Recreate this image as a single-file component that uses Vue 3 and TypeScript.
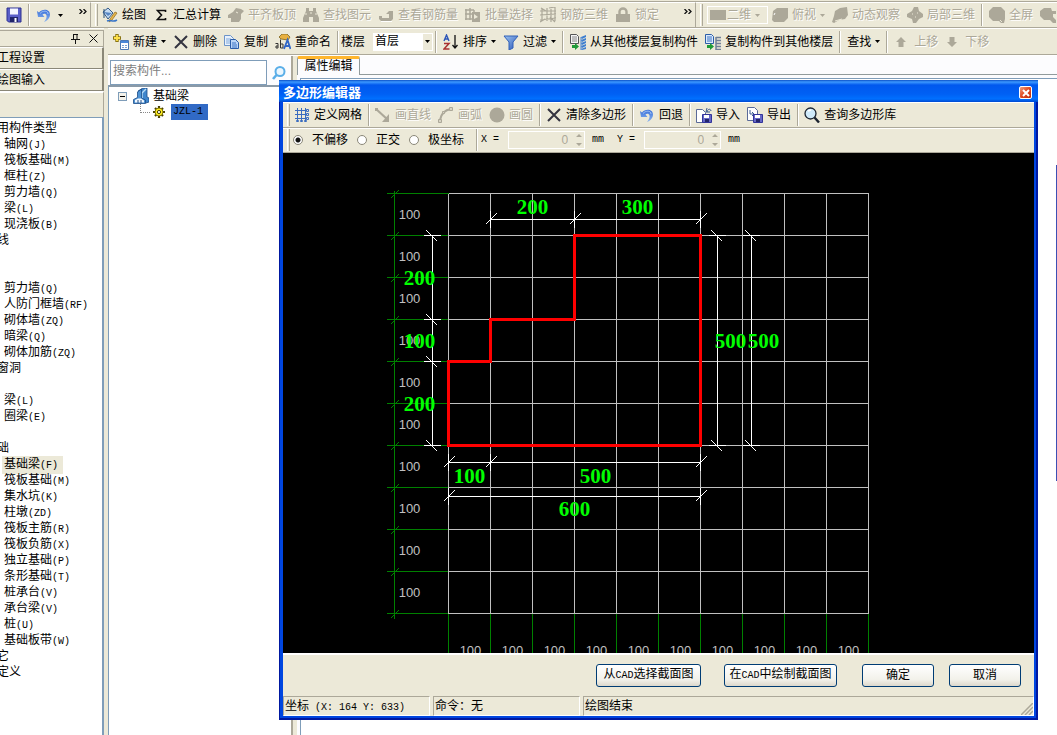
<script setup lang="ts">
import { ref } from 'vue'

interface Tool { icon?: string; label: string; off?: boolean; caret?: boolean; sep?: boolean }
interface Node { text: string; code?: string; group?: boolean; active?: boolean }
interface Mark { x: number; y: number; text: string }

const drawTools: Tool[] = [
  { icon: 'paint', label: '绘图' },
  { icon: 'sigma', label: '汇总计算' },
  { icon: 'align', label: '平齐板顶', off: true },
  { icon: 'binoculars', label: '查找图元', off: true },
  { icon: 'rebar', label: '查看钢筋量', off: true },
  { icon: 'batch', label: '批量选择', off: true },
  { icon: 'mesh', label: '钢筋三维', off: true },
  { icon: 'lock', label: '锁定', off: true },
]
const viewTools: Tool[] = [
  { icon: 'cube', label: '俯视', off: true, caret: true },
  { icon: 'orbit', label: '动态观察', off: true },
  { icon: 'part', label: '局部三维', off: true, sep: true },
  { icon: 'zoomoff', label: '全屏', off: true },
  { icon: 'zoomplus', label: '', off: true },
]
const editTools: Tool[] = [
  { icon: 'new', label: '新建', caret: true },
  { icon: 'cross', label: '删除' },
  { icon: 'copy', label: '复制' },
  { icon: 'rename', label: '重命名', sep: true },
]
const listTools: Tool[] = [
  { icon: 'sort', label: '排序', caret: true },
  { icon: 'filter', label: '过滤', caret: true, sep: true },
  { icon: 'floorin', label: '从其他楼层复制构件' },
  { icon: 'floorout', label: '复制构件到其他楼层', sep: true },
  { label: '查找', caret: true, sep: true },
  { icon: 'up', label: '上移', off: true },
  { icon: 'down', label: '下移', off: true },
]
const polyTools: Tool[] = [
  { icon: 'grid', label: '定义网格', sep: true },
  { icon: 'line', label: '画直线', off: true },
  { icon: 'arc', label: '画弧', off: true },
  { icon: 'circle', label: '画圆', off: true, sep: true },
  { icon: 'cross', label: '清除多边形', sep: true },
  { icon: 'undo', label: '回退', sep: true },
  { icon: 'import', label: '导入' },
  { icon: 'export', label: '导出', sep: true },
  { icon: 'search', label: '查询多边形库' },
]

const nodes: Node[] = [
  { text: '用构件类型', group: true },
  { text: '轴网', code: '(J)' },
  { text: '筏板基础', code: '(M)' },
  { text: '框柱', code: '(Z)' },
  { text: '剪力墙', code: '(Q)' },
  { text: '梁', code: '(L)' },
  { text: '现浇板', code: '(B)' },
  { text: '线', group: true },
  { text: '' },
  { text: '' },
  { text: '剪力墙', code: '(Q)' },
  { text: '人防门框墙', code: '(RF)' },
  { text: '砌体墙', code: '(ZQ)' },
  { text: '暗梁', code: '(Q)' },
  { text: '砌体加筋', code: '(ZQ)' },
  { text: '窗洞', group: true },
  { text: '' },
  { text: '梁', code: '(L)' },
  { text: '圈梁', code: '(E)' },
  { text: '' },
  { text: '础', group: true },
  { text: '基础梁', code: '(F)', active: true },
  { text: '筏板基础', code: '(M)' },
  { text: '集水坑', code: '(K)' },
  { text: '柱墩', code: '(ZD)' },
  { text: '筏板主筋', code: '(R)' },
  { text: '筏板负筋', code: '(X)' },
  { text: '独立基础', code: '(P)' },
  { text: '条形基础', code: '(T)' },
  { text: '桩承台', code: '(V)' },
  { text: '承台梁', code: '(V)' },
  { text: '桩', code: '(U)' },
  { text: '基础板带', code: '(W)' },
  { text: '它', group: true },
  { text: '定义', group: true },
]

const snapModes = ['不偏移', '正交', '极坐标']
const snap = ref('不偏移')
const floor = ref('首层')
const keyword = ref('')

/* Drawing model: grid cells are 42 units, origin at the top-left grid node. */
const STEP = 42
const steps = Array.from({ length: 11 }, (_, i) => i * STEP)
const cells = Array.from({ length: 10 }, (_, i) => i * STEP)
const outline = '126,42 252,42 252,252 0,252 0,168 42,168 42,126 126,126'
const horizontalDims = [
  { y: 26, stops: [42, 126, 252] },
  { y: 269, stops: [0, 42, 252] },
  { y: 303, stops: [0, 252] },
]
const verticalDims = [
  { x: -16, stops: [42, 126, 168, 252] },
  { x: 269, stops: [42, 252] },
  { x: 303, stops: [42, 252] },
]
const marks: Mark[] = [
  { x: 84, y: 20, text: '200' },
  { x: 189, y: 20, text: '300' },
  { x: -29, y: 91, text: '200' },
  { x: -29, y: 154, text: '100' },
  { x: -29, y: 217, text: '200' },
  { x: 282, y: 154, text: '500' },
  { x: 315, y: 154, text: '500' },
  { x: 21, y: 289, text: '100' },
  { x: 147, y: 289, text: '500' },
  { x: 126, y: 322, text: '600' },
]
</script>

<template>
  <div class="app">
    <svg class="defs" aria-hidden="true">
      <defs>
        <linearGradient id="g-blue" x1="0" y1="0" x2="1" y2="1"><stop offset="0" stop-color="#9cc4f0" /><stop offset="1" stop-color="#2a55b8" /></linearGradient>
        <linearGradient id="g-undo" x1="0" y1="0" x2="0" y2="1"><stop offset="0" stop-color="#3a70d8" /><stop offset="1" stop-color="#8ab4f0" /></linearGradient>
        <symbol id="i-save" viewBox="0 0 16 16"><path d="M1 1h14v14H2.500L1 13.500z" fill="#5a5fc8" stroke="#2c3190" /><path d="M4 1.500h8v6H4z" fill="#f4f6ff" /><path d="M4 10h8v5H4z" fill="#20246a" /><path d="M8.500 11h2v4h-2z" fill="#fff" /></symbol>
        <symbol id="i-undo" viewBox="0 0 16 16"><path d="M1 4l2 1.500C6 1.500 14 1.500 14 7.500c0 3.500-2.500 6-6 7.500 2-2.500 3-4.500 2.500-6.500-.5-2-2.500-2.500-4-1L8.500 10H2z" fill="url(#g-undo)" /><path d="M4 6.500C7 3 12 3.500 12 7" fill="none" stroke="#b4d0fa" stroke-width=".8" /></symbol>
        <symbol id="i-paint" viewBox="0 0 16 16"><path d="M1 5l5-4 5 5-5 6z" fill="#c6dcf2" stroke="#345a88" /><path d="M2 5l4 4 4-3" fill="#5887c4" /><path d="M2 2v9" stroke="#26507c" /><path d="M15 6l-5 7-3 2 1-3 5-7z" fill="#e8b84a" stroke="#8a6520" stroke-width=".7" /><path d="M5 14c4-2 5 2 10-1" fill="none" stroke="#3976c8" stroke-width="1.500" /></symbol>
        <symbol id="i-sigma" viewBox="0 0 16 16"><path d="M12.500 5V3.500H4.500l4 4.500-4 4.500h8V11" fill="none" stroke="#111" stroke-width="1.600" /></symbol>
        <symbol id="i-align" viewBox="0 0 16 16"><path d="M0 8l5-3 3-4 5 1 3 2-3 3v5l-2 3H3v-4L0 11z" fill="#aca899" /><path d="M8 5l2 1" stroke="#ece9d8" /></symbol>
        <symbol id="i-binoculars" viewBox="0 0 16 16"><path d="M3 1h3v3h4V1h3v3l3 7v4h-6v-5H6v5H0v-4l3-7z" fill="#aca899" /><path d="M7 6h2M3 6v2M13 6v2" stroke="#ece9d8" /></symbol>
        <symbol id="i-rebar" viewBox="0 0 16 16"><path d="M1 9h3v2h7V7H8l3-3h4v8l-2 2H3l-2-2z" fill="#aca899" /><path d="M3 14.500h11" stroke="#fff" /></symbol>
        <symbol id="i-batch" viewBox="0 0 16 16"><path d="M1 2v11M5 1v12M0 3h9M0 7h7M0 12h8M9 3v3" stroke="#aca899" stroke-width="1.500" /><path d="M7 5h8v10H7z" fill="#aca899" /><path d="M9 7l4 3-4 2z" fill="#ece9d8" /></symbol>
        <symbol id="i-mesh" viewBox="0 0 16 16"><path d="M2 1v13M7 1v13M11 2v13M15 0v14M0 4h16M0 8l16-1M0 13l16-2M1 1l5 3M9 1l6-1M0 15l5-3M10 10l5 5" stroke="#aca899" stroke-width="1.200" /></symbol>
        <symbol id="i-lock" viewBox="0 0 16 16"><path d="M4.500 8V4.500a3.500 3 0 0 1 7 0V8" fill="none" stroke="#aca899" stroke-width="2.400" /><path d="M1 7h14v8H1z" fill="#aca899" /></symbol>
        <symbol id="i-cube" viewBox="0 0 16 16"><path d="M1 4l4-3h11v10l-4 4H2l-2-2z" fill="#aca899" /><path d="M2 8l1-2" stroke="#fff" /></symbol>
        <symbol id="i-orbit" viewBox="0 0 16 16"><path d="M15 0l1 8-3 4-6 1-5 3-2-1 2-6 1-5 5-3z" fill="#aca899" /><path d="M3 14l7-2" stroke="#ece9d8" /></symbol>
        <symbol id="i-part" viewBox="0 0 16 16"><path d="M7 0h4l1 4 4 3v3l-4 2-3 4H6l-1-4-5-2V7l5-3z" fill="#aca899" /><path d="M5 7h1M10 6h1M8 10h1" stroke="#ece9d8" /></symbol>
        <symbol id="i-zoomoff" viewBox="0 0 16 16"><path d="M4 0h8l4 4v8l-1 4h-3l-2-2H4l-4-4V4z" fill="#aca899" /><path d="M11 13l2 2" stroke="#ece9d8" /></symbol>
        <symbol id="i-zoomplus" viewBox="0 0 16 16"><path d="M4 1h7l1 3h4v3h-3v3l3 3v3h-3l-3-3H4L0 9V4z" fill="#aca899" /></symbol>
        <symbol id="i-new" viewBox="0 0 16 16"><path d="M4 0v8M0 4h8" stroke="#8a7412" stroke-width="3.400" /><path d="M4 1v6M1 4h6" stroke="#ffe24a" stroke-width="1.800" /><path d="M7.500 6.500h8v9h-8z" fill="#fff" stroke="#4c78b4" /><path d="M8 7h7v2H8z" fill="#4a87d8" /><path d="M9 11.500h2M12 11.500h2M9 13.500h2M12 13.500h2" stroke="#7aa0d0" /></symbol>
        <symbol id="i-cross" viewBox="0 0 16 16"><path d="M2 2l12 12M14 2L2 14" stroke="#343440" stroke-width="2" /></symbol>
        <symbol id="i-copy" viewBox="0 0 16 16"><path d="M.5 1.500h6l3 3v7h-9z" fill="#e8f1fc" stroke="#6d94c8" /><path d="M2 5h5M2 7h5M2 9h5" stroke="#7ea8dc" /><path d="M6.500 5.500h5l3 3v6h-8z" fill="#bcd6f6" stroke="#2c5ea8" /><path d="M8 9h4M8 11h5M8 13h5" stroke="#3d74c4" /></symbol>
        <symbol id="i-rename" viewBox="0 0 16 16"><path d="M4 3l3-3h5l3 3-2 3-7-1z" fill="#e8b040" stroke="#7c6420" stroke-width=".8" /><path d="M.5 9.500H3V14H1v-2h2M5.500 5.500V14H8v-4H5.500" fill="none" stroke="#333" /><path d="M9 15l3.500-9L15.500 15M10 12h4" fill="none" stroke="#2f66c8" stroke-width="1.800" /></symbol>
        <symbol id="i-sort" viewBox="0 0 16 16"><path d="M1 7l2.500-6L6 7M2 5h3" fill="none" stroke="#2c56b8" stroke-width="1.400" /><path d="M1 9.500h5L1 15h5.500" fill="none" stroke="#a83030" stroke-width="1.500" /><path d="M12 1v12M9.500 11l2.500 3 2.500-3" fill="none" stroke="#111" stroke-width="1.300" /></symbol>
        <symbol id="i-filter" viewBox="0 0 16 16"><path d="M1 2h14l-5 6v6l-4 2V8z" fill="url(#g-blue)" stroke="#3060b8" /></symbol>
        <symbol id="i-floorin" viewBox="0 0 16 16"><path d="M.5.500h6l2 2v7h-8z" fill="#f4f4f4" stroke="#555" /><path d="M2 3h5M2 5h5M2 7h5" stroke="#888" /><path d="M11 3l5-2v2l-4 2zM11 6l5-2v2l-4 2zM11 9l5-2v2l-4 2zM11 12l5-2v2l-4 2zM11 15l5-2v2l-4 1z" fill="#3f7fd0" /><path d="M11 3v13" stroke="#3f7fd0" /><path d="M2 11h3V9l4 3.500L5 16v-2H2z" fill="#1f9a38" /></symbol>
        <symbol id="i-floorout" viewBox="0 0 16 16"><path d="M.5.500h6l2 2v7h-8z" fill="#dce9fb" stroke="#2c5ea8" /><path d="M2 3h5M2 5h5M2 7h5" stroke="#3d74c4" /><path d="M11 3.500h5M11 6.500h5M11 9.500h5M11 12.500h5M11 15.500h5M11 3v13" stroke="#6f8098" stroke-width="1.500" /><path d="M2 11h3V9l4 3.500L5 16v-2H2z" fill="#1f9a38" /></symbol>
        <symbol id="i-up" viewBox="0 0 16 16"><path d="M7 3l5 5H9.500v5h-5V8H2z" fill="#aca899" /></symbol>
        <symbol id="i-down" viewBox="0 0 16 16"><path d="M7 13l5-5H9.500V3h-5v5H2z" fill="#aca899" /></symbol>
        <symbol id="i-grid" viewBox="0 0 16 16"><path d="M3.500 1v13M7.500 1v13M11.500 1v13M1 3.500h12M1 7.500h12M1 11.500h12" stroke="#3a6cc0" /><path d="M12.500 2.500h2v2h-2zM12.500 6.500h2v2h-2zM12.500 10.500h2v2h-2zM2.500 13.500h2v1h-2zM6.500 13.500h2v1h-2zM10.500 13.500h2v1h-2z" fill="#ece9d8" stroke="#3a6cc0" /></symbol>
        <symbol id="i-line" viewBox="0 0 16 16"><path d="M1 2l11 10" stroke="#aca899" stroke-width="2.200" /><path d="M0 1h3v3H0zM14 7v8H7z" fill="#aca899" /></symbol>
        <symbol id="i-arc" viewBox="0 0 16 16"><path d="M2 13C3 7 7 3 13 2" fill="none" stroke="#aca899" stroke-width="2" /><path d="M.5 12.500h3v3h-3zM11.500.500h3v3h-3zM4.500 4.500h2v2h-2z" fill="#d8d4c4" stroke="#aca899" /></symbol>
        <symbol id="i-circle" viewBox="0 0 16 16"><circle cx="8" cy="8" r="7.500" fill="#aca899" /></symbol>
        <symbol id="i-import" viewBox="0 0 16 16"><path d="M.5 2.500h6l3 3v10h-9z" fill="#fff" stroke="#5a6a98" /><path d="M11 1l-1 4h4M11 5c1-4 4-3 4-1" fill="none" stroke="#3a5a90" /><path d="M6.500 7.500h9v8h-9z" fill="#6668c8" stroke="#32349a" /><path d="M8 8h5v3H8z" fill="#fff" /><path d="M9 12h4v3H9z" fill="#23256c" /></symbol>
        <symbol id="i-export" viewBox="0 0 16 16"><path d="M.5.500h7l3 3v10h-10z" fill="#fff" stroke="#5a6a98" /><path d="M3 3v4h4M5 5l2 2-2 2" fill="none" stroke="#3a5a90" /><path d="M6.500 7.500h9v8h-9z" fill="#6668c8" stroke="#32349a" /><path d="M8 8h5v3H8z" fill="#fff" /><path d="M9 12h4v3H9z" fill="#23256c" /></symbol>
        <symbol id="i-search" viewBox="0 0 16 16"><circle cx="6.500" cy="6.500" r="5.500" fill="#cfeafa" stroke="#1c2430" stroke-width="1.300" /><path d="M4 4l3-1" stroke="#fff" stroke-width="1.500" /><path d="M10.500 10.500l4.500 5" stroke="#1c2430" stroke-width="2.400" /></symbol>
        <symbol id="i-find" viewBox="0 0 16 16"><circle cx="9" cy="6.500" r="4.500" fill="#eaf6ff" stroke="#5aaee8" stroke-width="2" /><path d="M5.500 10L2 14" stroke="#5aaee8" stroke-width="2.600" /></symbol>
        <symbol id="i-beam" viewBox="0 0 16 16"><path d="M5 3l5-3h4v9l2 1v4l-3 1-4-3z" fill="#3f86cc" stroke="#1c4c88" stroke-width=".8" /><path d="M13 1L9 5v6" fill="none" stroke="#b8dcf6" stroke-width="1.400" /><path d="M.5 15.500v-4l4-2V4l4-3v9l4 2v3.500z" fill="#4d92d4" stroke="#1c4c88" stroke-width=".8" /><path d="M2 14.500V12l3-1.500h3l3 2v2z" fill="#f2f8fe" /><path d="M5 15v-3M8 15v-3" stroke="#234f88" /></symbol>
        <symbol id="i-gear" viewBox="0 0 12 12"><path d="M6 0v12M0 6h12M2 2l8 8M10 2l-8 8" stroke="#4a4200" stroke-width="2.200" /><circle cx="6" cy="6" r="4" fill="#ffee22" stroke="#6a5e00" stroke-width=".8" /><circle cx="6" cy="6" r="1.600" fill="#fff" stroke="#4a4200" /></symbol>
        <symbol id="i-caret" viewBox="0 0 5 3"><path d="M0 0h5L2.500 3z" fill="currentColor" /></symbol>
        <symbol id="i-more" viewBox="0 0 8 5"><path d="M.5 0L3 2.500.5 5M4.500 0L7 2.500 4.500 5" fill="none" stroke="#111" stroke-width="1.300" /></symbol>
      </defs>
    </svg>

    <header class="top">
      <div class="strip quick">
        <button class="tool" type="button" aria-label="保存"><svg class="ic"><use href="#i-save" /></svg></button>
        <span class="sep"></span>
        <button class="tool undo" type="button" aria-label="撤销"><svg class="ic"><use href="#i-undo" /></svg><svg class="caret"><use href="#i-caret" /></svg></button>
        <svg class="more"><use href="#i-more" /></svg>
      </div>
      <div class="strip">
        <span class="grip"></span>
        <button v-for="t in drawTools" :key="t.label" class="tool" :class="{ off: t.off }" type="button" :disabled="t.off">
          <svg class="ic"><use :href="'#i-' + t.icon" /></svg>{{ t.label }}
        </button>
        <svg class="more"><use href="#i-more" /></svg>
      </div>
      <div class="strip view">
        <span class="grip"></span>
        <button class="tool off mode" type="button" disabled><span class="swatch"></span>二维<svg class="caret"><use href="#i-caret" /></svg></button>
        <template v-for="t in viewTools" :key="t.icon">
          <button class="tool off" type="button" disabled>
            <svg class="ic"><use :href="'#i-' + t.icon" /></svg>{{ t.label }}<svg v-if="t.caret" class="caret"><use href="#i-caret" /></svg>
          </button>
          <span v-if="t.sep" class="sep"></span>
        </template>
      </div>
    </header>

    <div class="body">
      <aside class="side">
        <div class="caption">
          <svg width="9" height="10"><path d="M2.500 0v5M6 0v5M2 .5h5M0 5.500h9M4.500 6v4" stroke="#111" /></svg>
          <svg width="9" height="9"><path d="M.5.500l8 8M8.500.500l-8 8" stroke="#111" /></svg>
        </div>
        <button class="section" type="button">工程设置</button>
        <button class="section" type="button">绘图输入</button>
        <div class="blank"></div>
        <ul class="types">
          <li v-for="(n, i) in nodes" :key="i" :class="{ group: n.group }">
            <span :class="{ active: n.active }">{{ n.text }}<span v-if="n.code" class="mono">{{ n.code }}</span></span>
          </li>
        </ul>
      </aside>

      <main class="main">
        <div class="editbar">
          <template v-for="t in editTools" :key="t.label">
            <button class="tool" type="button"><svg class="ic"><use :href="'#i-' + t.icon" /></svg>{{ t.label }}<svg v-if="t.caret" class="caret"><use href="#i-caret" /></svg></button>
            <span v-if="t.sep" class="sep"></span>
          </template>
          <div class="floor">
            <label for="floor">楼层</label>
            <div class="combo">
              <select id="floor" v-model="floor"><option>首层</option></select>
              <span class="drop"><svg class="caret"><use href="#i-caret" /></svg></span>
            </div>
          </div>
          <span class="sep"></span>
          <template v-for="t in listTools" :key="t.label">
            <button class="tool" :class="{ off: t.off }" type="button" :disabled="t.off"><svg v-if="t.icon" class="ic"><use :href="'#i-' + t.icon" /></svg>{{ t.label }}<svg v-if="t.caret" class="caret"><use href="#i-caret" /></svg></button>
            <span v-if="t.sep" class="sep"></span>
          </template>
        </div>

        <div class="work">
          <section class="parts">
            <div class="finder">
              <input v-model="keyword" type="text" placeholder="搜索构件..." aria-label="搜索构件">
              <button class="tool" type="button" aria-label="搜索"><svg class="ic"><use href="#i-find" /></svg></button>
            </div>
            <div class="tree">
              <div class="branch"><span class="toggle"></span><svg class="ic"><use href="#i-beam" /></svg><span>基础梁</span></div>
              <div class="leaf"><span class="elbow"></span><svg class="gear"><use href="#i-gear" /></svg><span class="picked mono">JZL-1</span></div>
            </div>
          </section>
          <section class="props">
            <div class="tabs"><button class="tab" type="button">属性编辑</button></div>
            <div class="sheet"><span class="edge"></span></div>
          </section>
        </div>
      </main>
    </div>

    <div class="dialog" role="dialog" aria-labelledby="dlg">
      <div class="title">
        <span id="dlg">多边形编辑器</span>
        <button class="close" type="button" aria-label="关闭"><svg width="8" height="8"><path d="M1 1l6 6M7 1L1 7" stroke="#fff" stroke-width="2" /></svg></button>
      </div>
      <div class="pane">
        <div class="row">
          <span class="grip"></span>
          <template v-for="t in polyTools" :key="t.label">
            <button class="tool" :class="{ off: t.off }" type="button" :disabled="t.off"><svg class="ic"><use :href="'#i-' + t.icon" /></svg>{{ t.label }}</button>
            <span v-if="t.sep" class="sep"></span>
          </template>
        </div>
        <div class="row options">
          <span class="grip"></span>
          <label v-for="m in snapModes" :key="m" class="radio"><input v-model="snap" type="radio" name="snap" :value="m">{{ m }}</label>
          <span class="sep"></span>
          <label class="mono axis" for="ox">X =</label>
          <span class="spin"><input id="ox" type="text" value="0" disabled><svg width="6" height="12"><path d="M0 3h6L3 0zM0 9h6L3 12z" fill="#aca899" /></svg></span>
          <span class="mono unit">mm</span>
          <label class="mono axis" for="oy">Y =</label>
          <span class="spin"><input id="oy" type="text" value="0" disabled><svg width="6" height="12"><path d="M0 3h6L3 0zM0 9h6L3 12z" fill="#aca899" /></svg></span>
          <span class="mono unit">mm</span>
        </div>
        <svg class="canvas" shape-rendering="crispEdges">
          <g transform="translate(165.5 40.5)">
            <g stroke="#008000">
              <path d="M-54 -3v428" />
              <path v-for="s in steps" :key="'gh' + s" :d="`M-62 ${s}H0M-58 ${s + 5}l8 -8`" />
              <path v-for="s in steps" :key="'gv' + s" :d="`M${s} 420V460`" />
            </g>
            <g stroke="#c0c0c0">
              <path v-for="s in steps" :key="'h' + s" :d="`M0 ${s}H420`" />
              <path v-for="s in steps" :key="'v' + s" :d="`M${s} 0V420`" />
            </g>
            <g class="scale">
              <text v-for="c in cells" :key="'tl' + c" x="-39" :y="c + 25">100</text>
              <text v-for="c in cells" :key="'tb' + c" :x="c + 22" y="461">100</text>
            </g>
            <g stroke="#fff">
              <template v-for="d in horizontalDims" :key="'dh' + d.y">
                <path :d="`M${d.stops[0]} ${d.y}H${d.stops[d.stops.length - 1]}`" />
                <path v-for="s in d.stops" :key="s" :d="`M${s} ${d.y - 9}v17M${s - 5} ${d.y + 5}l11 -11`" />
              </template>
              <template v-for="d in verticalDims" :key="'dv' + d.x">
                <path :d="`M${d.x} ${d.stops[0]}V${d.stops[d.stops.length - 1]}`" />
                <path v-for="s in d.stops" :key="s" :d="`M${d.x - 9} ${s}h17M${d.x - 6} ${s - 5}l11 11`" />
              </template>
            </g>
            <polygon :points="outline" fill="none" stroke="#f00" stroke-width="3" />
            <g class="size">
              <text v-for="(m, i) in marks" :key="i" :x="m.x" :y="m.y">{{ m.text }}</text>
            </g>
          </g>
        </svg>
        <div class="actions">
          <button class="btn from" type="button">从<span class="mono">CAD</span>选择截面图</button>
          <button class="btn draw" type="button">在<span class="mono">CAD</span>中绘制截面图</button>
          <button class="btn" type="button">确定</button>
          <button class="btn" type="button">取消</button>
        </div>
        <footer class="status">
          <span class="cell">坐标<span class="mono"> (X: 164 Y: 633)</span></span>
          <span class="cell">命令：无</span>
          <span class="cell last">绘图结束
            <svg class="size-grip" width="12" height="12"><path d="M0 12L12 0M4 12l8-8M8 12l4-4" stroke="#aca899" stroke-width="1.500" /></svg>
          </span>
        </footer>
      </div>
    </div>
  </div>
</template>

<style>
body { background: #ece9d8; }
</style>

<style scoped>
.app {
  position: relative;
  display: flex;
  flex-direction: column;
  height: 100vh;
  overflow: hidden;
  box-sizing: border-box;
  padding-top: 1px;
  background: #ece9d8;
  color: #000;
  font: 12px/16px "Liberation Sans", "Noto Sans CJK SC", sans-serif;
  white-space: nowrap;
}
.app *, .app *::before { box-sizing: border-box; }
.defs { position: absolute; width: 0; height: 0; }
button, input, select { font: inherit; color: inherit; }
.mono { font-family: "Liberation Mono", monospace; font-size: 10px; white-space: pre; }
.ic { width: 16px; height: 16px; flex: none; }
.caret { width: 5px; height: 3px; flex: none; }
.tool {
  display: inline-flex;
  align-items: center;
  flex: none;
  gap: 4px;
  padding: 0;
  border: 0;
  background: none;
  height: 20px;
}
.off { color: #aca899; text-shadow: 1px 1px #fff; }
.sep { flex: none; width: 2px; height: 22px; margin: 0 -1px; border-left: 1px solid #aca899; border-right: 1px solid #fff; }
.grip { flex: none; width: 3px; height: 22px; margin-right: -3px; border-left: 1px solid #fff; border-right: 1px solid #aca899; }

.top { display: grid; grid-template-columns: 91px 605px minmax(0, 1fr); flex: none; height: 27px; border-top: 1px solid #aca899; border-bottom: 1px solid #aca899; }
.strip { position: relative; display: flex; align-items: center; gap: 7px; padding-left: 4px; border-right: 1px solid #aca899; border-top: 1px solid #fff; overflow: hidden; }
.quick { padding-left: 6px; }
.view { border-right: 0; }
.undo { gap: 6px; }
.more { position: absolute; right: 3px; top: 6px; width: 8px; height: 5px; }
.mode { height: 18px; width: 61px; padding-left: 2px; border: 1px solid #fff; margin-right: -3px; }
.swatch { width: 16px; height: 10px; margin-right: -3px; background: #aca899; }

.body { display: flex; flex: 1; min-height: 0; }
.side { display: flex; flex-direction: column; flex: none; width: 104px; border-top: 1px solid #fff; }
.caption { display: flex; flex: none; align-items: center; justify-content: flex-end; gap: 9px; height: 17px; margin-top: 1px; padding-right: 5px; border: 1px solid #aca899; border-left: 0; }
.section { flex: none; height: 22px; padding: 0; margin-left: -3px; text-align: left; background: #ece9d8; border: 0; border-top: 1px solid #fff; border-right: 2px solid #8a8778; border-bottom: 1px solid #8a8778; }
.blank { flex: none; height: 26px; border-top: 2px solid #fff; border-right: 1px solid #aca899; }
.types { flex: 1; margin: 0; padding: 2px 0 0 4px; list-style: none; overflow: hidden; background: #fff; border-top: 1px solid #7f9db9; border-right: 2px solid #7f9db9; }
.types li { height: 16px; }
.types .group { margin-left: -7px; }
.active { display: inline-block; margin-left: -2px; padding: 0 5px 0 2px; background: #ece9d8; }

.main { display: flex; flex: 1; flex-direction: column; min-width: 0; margin-left: 4px; }
.editbar { display: flex; flex: none; align-items: center; gap: 7px; height: 27px; padding-left: 5px; border-top: 1px solid #fff; border-bottom: 1px solid #aca899; overflow: hidden; }
.floor { display: flex; flex: none; align-items: center; gap: 8px; margin: 0 -4px; }
.combo { position: relative; display: flex; width: 60px; height: 18px; background: #fff; }
.combo select { width: 100%; padding: 0 0 2px 2px; border: 0; background: #fff; appearance: none; outline: 0; }
.drop { position: absolute; right: 1px; top: 1px; display: flex; align-items: center; justify-content: center; width: 9px; height: 16px; background: #ece9d8; pointer-events: none; }
.work { display: flex; flex: 1; min-height: 0; background: #fcfcfe; border-top: 1px solid #fff; }
.parts { display: flex; flex: none; flex-direction: column; width: 185px; border-right: 2px solid #aca899; }
.finder { display: flex; flex: none; align-items: center; gap: 4px; height: 29px; padding: 4px 0 0 2px; }
.finder input { width: 157px; height: 25px; padding: 0 2px 4px; border: 1px solid #7f9db9; background: #fff; outline: 0; }
.finder input::placeholder { color: #808080; opacity: 1; }
.tree { flex: 1; padding: 1px 0 0 9px; background: #fff; border-top: 2px solid #8a9aa8; border-left: 1px solid #7f9db9; }
.branch, .leaf { display: flex; align-items: center; height: 16px; }
.branch .ic { margin: 0 4px 0 6px; }
.toggle { display: flex; align-items: center; width: 9px; height: 9px; border: 1px solid #7f9db9; background: #f4f2ea; }
.toggle::before { content: ""; width: 5px; height: 1px; margin: 0 1px; background: #000; }
.elbow { align-self: flex-start; width: 10px; height: 9px; margin: 0 3px 0 22px; border-left: 1px dotted #888; border-bottom: 1px dotted #888; }
.gear { width: 12px; height: 12px; margin-right: 6px; }
.picked { width: 37px; padding-left: 2px; background: #316ac5; }
.props { display: flex; flex: 1; flex-direction: column; min-width: 0; border-left: 4px solid #ece9d8; }
.tabs { display: flex; height: 19px; border-bottom: 1px solid #919b9c; }
.tab { width: 63px; height: 19px; padding: 0 0 3px; background: #fcfcfe; border: 1px solid #919b9c; border-bottom: 0; border-top: 3px solid #ffb62e; border-radius: 2px 2px 0 0; line-height: 12px; }
.sheet { position: relative; flex: 1; margin: 3px 0 0 3px; background: #fff; border-top: 1px solid #7f9db9; border-left: 1px solid #7f9db9; }
.edge { position: absolute; right: 0; top: 86px; width: 1px; height: 316px; background: #3c50b4; }

.dialog {
  position: absolute;
  left: 279px;
  top: 80px;
  right: 19px;
  bottom: 15px;
  display: flex;
  flex-direction: column;
  padding: 0 4px 4px;
  background: #0046e0;
  box-shadow: inset 1px 0 #0018a0, inset -2px -2px #0018a0;
}
.title {
  display: flex;
  flex: none;
  align-items: center;
  justify-content: space-between;
  height: 22px;
  margin: 0 -4px;
  padding: 3px 6px 0 4px;
  color: #fff;
  font-size: 13px;
  font-weight: 700;
  background: linear-gradient(#0a50c8 0, #3c98ff 2px, #0058ee 5px, #0060f4 14px, #0070ff 19px, #0048d0 22px);
}
.close { display: flex; align-items: center; justify-content: center; width: 13px; height: 13px; padding: 0; border: 1px solid #fff; border-radius: 2px; background: linear-gradient(135deg, #f0a080, #e04820 50%, #b83010); }
.pane { display: flex; flex: 1; flex-direction: column; min-height: 0; background: #ece9d8; }
.row { display: flex; flex: none; align-items: center; gap: 7px; height: 26px; padding-left: 4px; border-top: 1px solid #fff; border-bottom: 1px solid #aca899; overflow: hidden; }
.row .sep { margin: 0 -2px 0 -1px; }
.row.options { height: 25px; gap: 9px; padding-bottom: 1px; }
.row.options .sep { margin-left: 3px; margin-right: -6px; }
.radio { display: flex; align-items: center; gap: 9px; }
.grip + .radio { margin-left: -3px; }
.radio input { width: 10px; height: 10px; margin: 0; appearance: none; border: 1px solid #8a8778; border-radius: 50%; background: #fff; }
.radio input:checked { background: radial-gradient(circle, #111 0 2px, #fff 3px); }
.spin { display: flex; align-items: center; width: 77px; height: 18px; padding-right: 2px; border: 1px solid #fff; }
.spin input { flex: 1; min-width: 0; padding: 0 8px 0 0; border: 0; background: none; color: #aca899; text-align: right; }
.unit { margin: 0 4px 0 -2px; }
.canvas { display: block; flex: 1; width: 100%; min-height: 0; overflow: hidden; background: #000; }
.scale { fill: #c0c0c0; font: 13px "Liberation Sans", sans-serif; text-anchor: middle; }
.size { fill: #0f0; font: bold 21px "Liberation Serif", serif; text-anchor: middle; }
.actions { display: flex; flex: none; align-items: center; justify-content: flex-end; gap: 15px; height: 43px; padding: 0 13px 1px 0; border-top: 2px solid #fff; }
.btn { width: 72px; height: 23px; padding: 0; border: 1px solid #003c74; border-radius: 3px; background: linear-gradient(#fff, #f2f1ea 70%, #dcd8cc); }
.from { width: 105px; margin-right: 8px; }
.draw { width: 113px; margin-right: 10px; }
.status { display: flex; flex: none; gap: 3px; height: 20px; }
.cell { width: 147px; height: 20px; padding-left: 1px; border: 1px solid #aca899; border-right-color: #fff; border-bottom-color: #fff; line-height: 18px; }
.last { position: relative; flex: 1; }
.size-grip { position: absolute; right: 0; bottom: 0; }
</style>
